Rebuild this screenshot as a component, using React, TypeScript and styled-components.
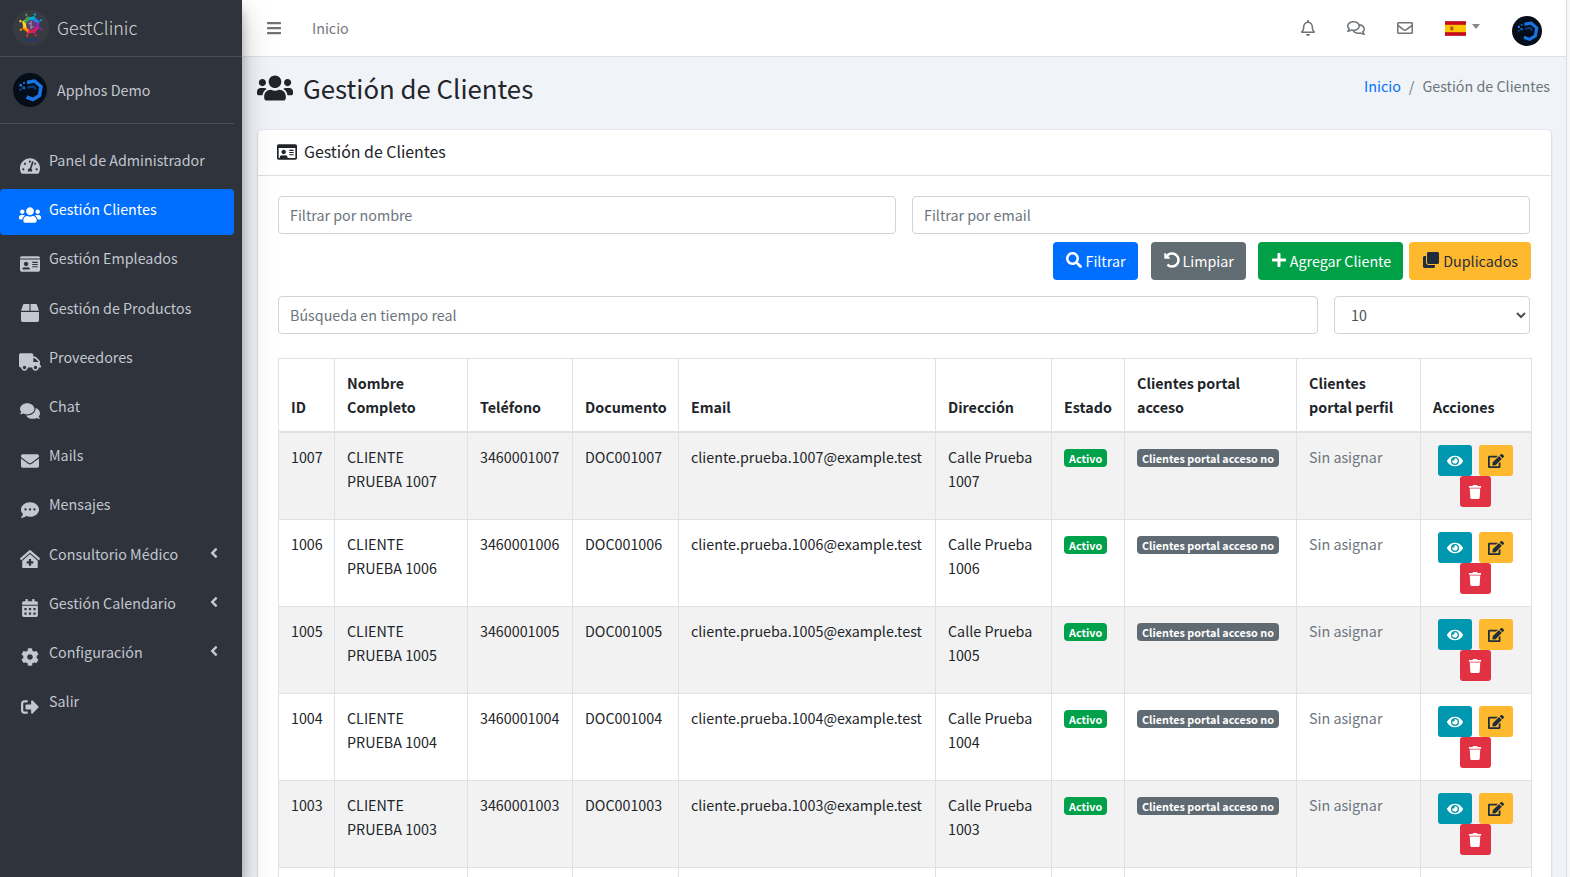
import React, { FC, ReactNode } from 'react';
import styled, { createGlobalStyle } from 'styled-components';
import {
    FaAngleLeft,
    FaBars,
    FaBox,
    FaCalendarAlt,
    FaClinicMedical,
    FaClone,
    FaCog,
    FaCommentDots,
    FaComments,
    FaEdit,
    FaEnvelope,
    FaEye,
    FaIdCard,
    FaPlus,
    FaRegBell,
    FaRegComments,
    FaRegEnvelope,
    FaRegIdCard,
    FaSearch,
    FaSignOutAlt,
    FaTachometerAlt,
    FaTrash,
    FaTruck,
    FaUndoAlt,
    FaUsers,
} from 'react-icons/fa';

const FONT = `"Noto Sans CJK SC", "Noto Sans", "Liberation Sans", sans-serif`;
const TEXT_SIZE = '14.3px';

const GlobalStyle = createGlobalStyle`
    html, body {
        margin: 0;
        height: 100%;
        overflow: hidden;
    }
    body {
        font-family: ${FONT};
        font-size: ${TEXT_SIZE};
        line-height: 24px;
        color: #212529;
    }
    * {
        box-sizing: border-box;
    }
`;

const Page = styled.div`
    display: flex;
    width: 1570px;
    height: 877px;
    overflow: hidden;
    background: #f0f3f7;
`;

const Sidebar = styled.aside`
    position: relative;
    z-index: 2;
    flex: 0 0 242px;
    background: #2f333b;
    box-shadow: 0 14px 28px rgba(0, 0, 0, 0.25), 0 10px 10px rgba(0, 0, 0, 0.22);
`;

const Brand = styled.div`
    display: flex;
    align-items: center;
    height: 57px;
    padding-left: 13px;
    border-bottom: 1px solid #4b515a;
`;

const BrandName = styled.span`
    margin: 0 0 2px 8px;
    font-size: 17.9px;
    font-weight: 300;
    line-height: 28px;
    color: rgba(255, 255, 255, 0.8);
`;

const UserPanel = styled.div`
    display: flex;
    align-items: center;
    width: 234px;
    height: 67px;
    padding-left: 13px;
    border-bottom: 1px solid #4b515a;
`;

const UserName = styled.span`
    margin-left: 10px;
    color: #c2c7d0;
`;

const Nav = styled.nav`
    display: flex;
    flex-direction: column;
    gap: 3.2px;
    width: 234px;
    margin-top: 16px;
`;

const NavItem = styled.a<{ $active?: boolean }>`
    display: flex;
    height: 46px;
    padding: 8px 0 0 19px;
    border-radius: 4px;
    color: ${(p) => (p.$active ? '#fff' : '#c2c7d0')};
    background: ${(p) => (p.$active ? '#006fff' : 'transparent')};
`;

const NavIcon = styled.span`
    display: flex;
    align-items: center;
    justify-content: center;
    flex: 0 0 22px;
    height: 18px;
    margin: 8.5px 8px 0 0;
`;

const NavArrow = styled.span`
    display: flex;
    margin: 3px 12px 0 auto;
    font-size: 16px;
`;

const Main = styled.div`
    flex: 0 0 1324px;
    min-width: 0;
    height: 877px;
    overflow: hidden;
`;

const ScrollTrack = styled.div`
    flex: 0 0 4px;
    background: #f8f8f8;
    border-left: 1px solid #dcdcdc;
`;

const TopBar = styled.header`
    display: flex;
    align-items: center;
    height: 57px;
    padding: 0 24px;
    background: #fff;
    border-bottom: 1px solid #dee2e6;
    color: #6f7478;
`;

const Burger = styled.span`
    display: flex;
    margin-right: 30px;
    font-size: 16px;
`;

const TopLink = styled.span`
    color: #73777b;
`;

const TopIcons = styled.div`
    display: flex;
    align-items: center;
    margin-left: auto;
`;

const TopIcon = styled.span`
    display: flex;
    justify-content: center;
    width: 48.5px;
`;

const Language = styled.span`
    display: flex;
    align-items: center;
    margin: 0 32px 0 16px;
`;

const Caret = styled.span`
    width: 0;
    height: 0;
    margin: -3px 0 0 6px;
    border-top: 5px solid #84888c;
    border-left: 4.5px solid transparent;
    border-right: 4.5px solid transparent;
`;

const TopAvatar = styled.span`
    display: flex;
    margin-top: 5px;
`;

const Content = styled.main`
    padding: 0 15px 0 16px;
`;

const TitleRow = styled.div`
    display: flex;
    justify-content: space-between;
    height: 73px;
    padding-top: 12px;
`;

const Title = styled.h1`
    display: flex;
    align-items: center;
    height: 38px;
    margin: 0;
    font-size: 25.8px;
    font-weight: 400;
    line-height: 38px;
    color: #212529;
`;

const TitleIcon = styled.span`
    display: flex;
    margin: 0 10px 0 -1px;
    font-size: 36px;
`;

const Breadcrumb = styled.div`
    display: flex;
    height: 24px;
    margin: 5px 1px 0 0;
    color: #6c757d;
`;

const CrumbLink = styled.a`
    color: #006fff;
`;

const CrumbDivider = styled.span`
    padding: 0 8px;
`;

const Card = styled.section`
    background: #fff;
    border-radius: 4px;
    box-shadow: 0 0 1px rgba(0, 0, 0, 0.125), 0 1px 3px rgba(0, 0, 0, 0.2);
`;

const CardHeader = styled.div`
    display: flex;
    align-items: center;
    height: 46px;
    padding: 0 0 2px 19px;
    border-bottom: 1px solid #dfdfdf;
    font-size: 15.9px;
`;

const CardIcon = styled.span`
    display: flex;
    margin-right: 7px;
    font-size: 20px;
`;

const CardBody = styled.div`
    padding: 20px;
`;

const FilterGrid = styled.div`
    display: grid;
    grid-template-columns: 1fr 1fr;
    gap: 16px;
    width: 1252px;
`;

const SearchGrid = styled.div`
    display: grid;
    grid-template-columns: 1fr 196px;
    gap: 16px;
    width: 1252px;
    margin-bottom: 24px;
`;

const TextInput = styled.input`
    width: 100%;
    height: 38px;
    padding: 0 12px 2px 11px;
    border: 1px solid #ced4da;
    border-radius: 4px;
    background: #fff;
    font-family: ${FONT};
    font-size: ${TEXT_SIZE};
    color: #495057;
    &::placeholder {
        color: #6c757d;
        opacity: 1;
    }
`;

const PageSize = styled.select`
    width: 100%;
    height: 38px;
    padding: 0 12px 2px 12px;
    border: 1px solid #ced4da;
    border-radius: 4px;
    background: #fff;
    font-family: ${FONT};
    font-size: ${TEXT_SIZE};
    color: #495057;
`;

const ButtonRow = styled.div`
    display: flex;
    justify-content: flex-end;
    margin: 8px 0 16px;
`;

const Button = styled.button<{ $bg: string; $fg: string; $gap: number; $wide?: boolean }>`
    display: flex;
    align-items: center;
    gap: ${(p) => (p.$wide ? 4 : 3)}px;
    height: 38px;
    margin-left: ${(p) => p.$gap}px;
    padding: 0 ${(p) => (p.$wide ? 13 : 12)}px 2px ${(p) => (p.$wide ? 14 : 13)}px;
    border: 0;
    border-radius: 4px;
    background: ${(p) => p.$bg};
    color: ${(p) => p.$fg};
    font-family: ${FONT};
    font-size: ${TEXT_SIZE};
    svg {
        font-size: 16px;
    }
`;

const Table = styled.table`
    width: 1253px;
    table-layout: fixed;
    border-collapse: collapse;
`;

const HeadCell = styled.th`
    padding: 12px;
    border: 1px solid #dee2e6;
    border-bottom-width: 2px;
    font-weight: 700;
    line-height: 24px;
    text-align: left;
    vertical-align: bottom;
    color: #212529;
`;

const Row = styled.tr`
    height: 87px;
    &:nth-child(odd) {
        background: #f2f2f2;
    }
`;

const Cell = styled.td<{ $muted?: boolean }>`
    padding: 12px;
    border: 1px solid #dee2e6;
    line-height: 24px;
    vertical-align: top;
    color: ${(p) => (p.$muted ? '#6c757d' : '#212529')};
`;

const Badge = styled.span<{ $bg: string }>`
    display: inline-block;
    height: 18px;
    padding: 0 5px;
    border-radius: 4px;
    background: ${(p) => p.$bg};
    color: #fff;
    font-size: 10.8px;
    font-weight: 700;
    line-height: 18px;
    vertical-align: 0;
    white-space: nowrap;
`;

const Actions = styled.div`
    display: flex;
    flex-wrap: wrap;
    justify-content: center;
    column-gap: 7px;
    width: 90px;
    margin: 0 0 0 -3px;
`;

const IconButton = styled.button<{ $bg: string; $fg: string; $w: number }>`
    display: flex;
    align-items: center;
    justify-content: center;
    width: ${(p) => p.$w}px;
    height: 31px;
    padding: 0;
    border: 0;
    border-radius: 3px;
    background: ${(p) => p.$bg};
    color: ${(p) => p.$fg};
`;

const BrandLogo: FC = () => {
    const colors = ['#e53935', '#fb8c00', '#fdd835', '#43a047', '#00acc1', '#1e88e5', '#8e24aa', '#d81b60'];
    return (
        <svg width="36" height="36" viewBox="0 0 36 36">
            <circle cx="18" cy="18" r="18" fill="#383c42" />
            {colors.map((color, i) => (
                <g key={color} transform={`rotate(${i * 45 + 200} 18 15)`}>
                    <circle cx="18" cy="3.8" r="1.2" fill={color} />
                    <path d="M13 9 L18 5.5 L23 9 L21 15 H15 Z" fill={color} />
                </g>
            ))}
            <circle cx="18" cy="15" r="5" fill="#5a3f6e" />
            <path d="M18 11v8M15.5 13c1 1 1.7 1 2.5 0m0 3.5c1 1 1.7 1 2.5 0" stroke="#b9a5c6" strokeWidth="0.9" fill="none" />
            <rect x="10" y="29" width="16" height="2" rx="1" fill="#243a66" />
        </svg>
    );
};

const ApphosLogo: FC<{ size: number }> = ({ size }) => (
    <svg width={size} height={size} viewBox="0 0 34 34">
        <circle cx="17" cy="17" r="17" fill="#040d18" />
        <path d="M14 9.5 L21.5 8 L28 13.5 L26.5 22.5 L20 26.5 L13.5 24" fill="none" stroke="#1a74e4" strokeWidth="3.6" strokeLinejoin="round" />
        <path d="M14.5 14.5 L20.5 13.5 L23 16.5" fill="none" stroke="#0b3b7d" strokeWidth="2.4" />
        <rect x="6.5" y="11" width="2.6" height="2.6" fill="#1d77e0" />
        <rect x="9.5" y="13.6" width="2.6" height="2.6" fill="#1767c6" />
        <rect x="6.5" y="15.6" width="2" height="2" fill="#0f4f9d" />
        <rect x="10" y="9" width="2" height="2" fill="#1767c6" />
    </svg>
);

const SpainFlag: FC = () => (
    <svg width="21" height="15" viewBox="0 0 20 14">
        <rect width="20" height="14" fill="#c60b1e" />
        <rect y="3.5" width="20" height="7" fill="#ffc400" />
        <rect x="5" y="5" width="3" height="4" rx="1" fill="#ad5a1c" />
    </svg>
);

type MenuEntry = { label: string; icon: ReactNode; active?: boolean; arrow?: boolean };

// react-icons fit the glyph in a square, so wide glyphs need a larger size for the same height
const MENU: MenuEntry[] = [
    { label: 'Panel de Administrador', icon: <FaTachometerAlt size={20} /> },
    { label: 'Gestión Clientes', icon: <FaUsers size={22} />, active: true },
    { label: 'Gestión Empleados', icon: <FaIdCard size={20} /> },
    { label: 'Gestión de Productos', icon: <FaBox size={18} /> },
    { label: 'Proveedores', icon: <FaTruck size={22} /> },
    { label: 'Chat', icon: <FaComments size={20} /> },
    { label: 'Mails', icon: <FaEnvelope size={18} /> },
    { label: 'Mensajes', icon: <FaCommentDots size={18} /> },
    { label: 'Consultorio Médico', icon: <FaClinicMedical size={20} />, arrow: true },
    { label: 'Gestión Calendario', icon: <FaCalendarAlt size={18} />, arrow: true },
    { label: 'Configuración', icon: <FaCog size={18} />, arrow: true },
    { label: 'Salir', icon: <FaSignOutAlt size={18} /> },
];

const COLUMNS = [56, 133, 105, 106, 257, 116, 73, 172, 124, 111];
const HEADERS = [
    'ID',
    'Nombre Completo',
    'Teléfono',
    'Documento',
    'Email',
    'Dirección',
    'Estado',
    'Clientes portal acceso',
    'Clientes portal perfil',
    'Acciones',
];
const CLIENT_IDS = [1007, 1006, 1005, 1004, 1003, 1002];

const ClientRow: FC<{ id: number }> = ({ id }) => (
    <Row>
        <Cell>{id}</Cell>
        <Cell>CLIENTE PRUEBA {id}</Cell>
        <Cell>346000{id}</Cell>
        <Cell>DOC00{id}</Cell>
        <Cell>cliente.prueba.{id}@example.test</Cell>
        <Cell>Calle Prueba {id}</Cell>
        <Cell>
            <Badge $bg="#00a14b">Activo</Badge>
        </Cell>
        <Cell>
            <Badge $bg="#5f6a72">Clientes portal acceso no</Badge>
        </Cell>
        <Cell $muted>Sin asignar</Cell>
        <Cell>
            <Actions>
                <IconButton $bg="#0098b0" $fg="#fff" $w={34}>
                    <FaEye size={16} />
                </IconButton>
                <IconButton $bg="#ffb92e" $fg="#1f2d3d" $w={34}>
                    <FaEdit size={16} />
                </IconButton>
                <IconButton $bg="#e33144" $fg="#fff" $w={31}>
                    <FaTrash size={14} />
                </IconButton>
            </Actions>
        </Cell>
    </Row>
);

export default function App() {
    return (
        <Page>
            <GlobalStyle />
            <Sidebar>
                <Brand>
                    <BrandLogo />
                    <BrandName>GestClinic</BrandName>
                </Brand>
                <UserPanel>
                    <ApphosLogo size={34} />
                    <UserName>Apphos Demo</UserName>
                </UserPanel>
                <Nav>
                    {MENU.map((entry) => (
                        <NavItem key={entry.label} $active={entry.active}>
                            <NavIcon>{entry.icon}</NavIcon>
                            {entry.label}
                            {entry.arrow && (
                                <NavArrow>
                                    <FaAngleLeft />
                                </NavArrow>
                            )}
                        </NavItem>
                    ))}
                </Nav>
            </Sidebar>
            <Main>
                <TopBar>
                    <Burger>
                        <FaBars />
                    </Burger>
                    <TopLink>Inicio</TopLink>
                    <TopIcons>
                        <TopIcon>
                            <FaRegBell size={16} />
                        </TopIcon>
                        <TopIcon>
                            <FaRegComments size={18} />
                        </TopIcon>
                        <TopIcon>
                            <FaRegEnvelope size={16} />
                        </TopIcon>
                        <Language>
                            <SpainFlag />
                            <Caret />
                        </Language>
                        <TopAvatar>
                            <ApphosLogo size={30} />
                        </TopAvatar>
                    </TopIcons>
                </TopBar>
                <Content>
                    <TitleRow>
                        <Title>
                            <TitleIcon>
                                <FaUsers />
                            </TitleIcon>
                            Gestión de Clientes
                        </Title>
                        <Breadcrumb>
                            <CrumbLink>Inicio</CrumbLink>
                            <CrumbDivider>/</CrumbDivider>
                            Gestión de Clientes
                        </Breadcrumb>
                    </TitleRow>
                    <Card>
                        <CardHeader>
                            <CardIcon>
                                <FaRegIdCard />
                            </CardIcon>
                            Gestión de Clientes
                        </CardHeader>
                        <CardBody>
                            <FilterGrid>
                                <TextInput placeholder="Filtrar por nombre" />
                                <TextInput placeholder="Filtrar por email" />
                            </FilterGrid>
                            <ButtonRow>
                                <Button $bg="#006fff" $fg="#fff" $gap={0}>
                                    <FaSearch />
                                    Filtrar
                                </Button>
                                <Button $bg="#626d73" $fg="#fff" $gap={13}>
                                    <FaUndoAlt />
                                    Limpiar
                                </Button>
                                <Button $bg="#00a046" $fg="#fff" $gap={12}>
                                    <FaPlus />
                                    Agregar Cliente
                                </Button>
                                <Button $bg="#ffb92e" $fg="#1f2d3d" $gap={6} $wide>
                                    <FaClone />
                                    Duplicados
                                </Button>
                            </ButtonRow>
                            <SearchGrid>
                                <TextInput placeholder="Búsqueda en tiempo real" />
                                <PageSize defaultValue="10">
                                    <option value="10">10</option>
                                    <option value="25">25</option>
                                    <option value="50">50</option>
                                </PageSize>
                            </SearchGrid>
                            <Table>
                                <colgroup>
                                    {COLUMNS.map((width, i) => (
                                        <col key={i} width={width} />
                                    ))}
                                </colgroup>
                                <thead>
                                    <tr>
                                        {HEADERS.map((header) => (
                                            <HeadCell key={header}>{header}</HeadCell>
                                        ))}
                                    </tr>
                                </thead>
                                <tbody>
                                    {CLIENT_IDS.map((id) => (
                                        <ClientRow key={id} id={id} />
                                    ))}
                                </tbody>
                            </Table>
                        </CardBody>
                    </Card>
                </Content>
            </Main>
            <ScrollTrack />
        </Page>
    );
}
